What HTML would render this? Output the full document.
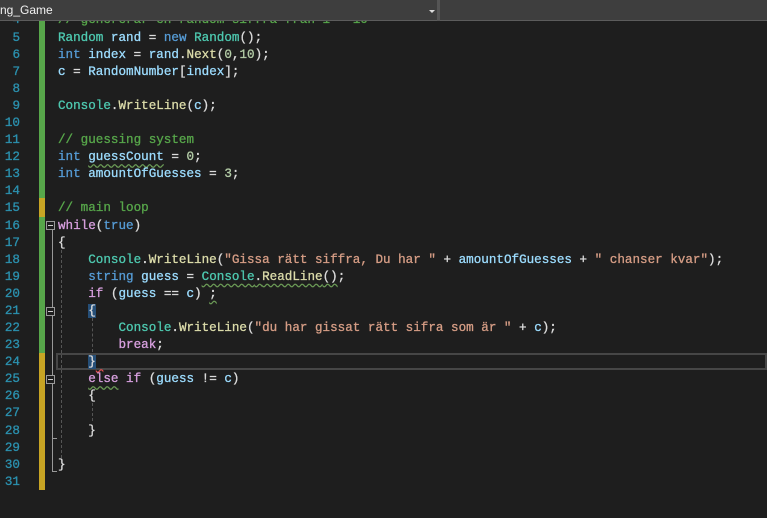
<!DOCTYPE html>
<html><head><meta charset="utf-8"><style>
*{margin:0;padding:0;box-sizing:border-box}
body{width:767px;height:518px;background:#1e1e1e;overflow:hidden;position:relative;font-family:"Liberation Mono",monospace;font-size:12.6px;color:#dcdcdc}
#tab{position:absolute;left:0;top:0;width:767px;height:21px;background:#3e3e3e;border-bottom:1px solid #5c5c5c;z-index:5}
#tab .t{position:absolute;left:0;top:3px;font-family:"Liberation Sans",sans-serif;font-size:12px;color:#f1f1f1}
#tab .sep{position:absolute;left:437px;top:0;width:3px;height:21px;background:#555}
#tab .arr{position:absolute;left:429px;top:10px;width:0;height:0;border-left:3px solid transparent;border-right:3px solid transparent;border-top:3px solid #ddd}
.ln{position:absolute;left:0;width:20px;text-align:right;color:#2b91af;height:17px;line-height:17px;-webkit-text-stroke:0.3px #2b91af}
.cd{position:absolute;left:58px;height:17px;line-height:17px;white-space:pre;-webkit-text-stroke:0.3px currentColor}
.bar{position:absolute;left:39px;width:6px}
.k{color:#569cd6}.ty{color:#4ec9b0}.m{color:#dcdcaa}.v{color:#9cdcfe}.s{color:#d69d85}.c{color:#57a64a}.p{color:#d8a0df}.n{color:#b5cea8}
.fold{position:absolute;left:46px;width:9px;height:9px;border:1px solid #999;background:#1e1e1e}
.fold:after{content:"";position:absolute;left:1px;top:3px;width:5px;height:1px;background:#ccc}
.sq{text-decoration:underline wavy #6a9955;text-underline-offset:3px}
.sqr{text-decoration:underline wavy #e05050;text-underline-offset:3px}
.g{position:absolute;border-left:1px dashed #555}
</style></head><body>
<div id="tab"><span class="t">ng_Game</span><div class="arr"></div><div class="sep"></div></div>

<div class="bar" style="top:12px;height:186px;background:#57a64a"></div>
<div class="bar" style="top:198px;height:19px;background:#c7a424"></div>
<div class="bar" style="top:217px;height:136px;background:#57a64a"></div>
<div class="bar" style="top:353px;height:137px;background:#c7a424"></div>

<div style="position:absolute;left:56px;top:353px;width:711px;height:17px;border:2px solid #464646"></div>

<div style="position:absolute;left:52px;top:227px;height:245px;border-left:1px solid #999"></div>
<div style="position:absolute;left:52px;top:471px;width:5px;border-top:1px solid #999"></div>
<div style="position:absolute;left:52px;top:318px;height:12px;border-left:1px solid #999"></div>
<div style="position:absolute;left:52px;top:438px;width:5px;border-top:1px solid #999"></div>
<div class="g" style="left:61px;top:250px;height:208px"></div>
<div class="g" style="left:92px;top:318px;height:34px"></div>
<div class="g" style="left:92px;top:403px;height:18px"></div>

<div class="fold" style="top:221px"></div>
<div class="fold" style="top:307px"></div>
<div class="fold" style="top:375px"></div>

<div class="ln" style="top:12.4px">4</div><div class="cd c" style="top:12.4px">// genererar en random siffra från 1 - 10</div>
<div class="ln" style="top:29.5px">5</div><div class="cd" style="top:29.5px"><span class="ty">Random</span> <span class="v">rand</span> = <span class="k">new</span> <span class="ty">Random</span>();</div>
<div class="ln" style="top:46.6px">6</div><div class="cd" style="top:46.6px"><span class="k">int</span> <span class="v">index</span> = <span class="v">rand</span>.<span class="m">Next</span>(<span class="n">0</span>,<span class="n">10</span>);</div>
<div class="ln" style="top:63.7px">7</div><div class="cd" style="top:63.7px"><span class="v">c</span> = <span class="v">RandomNumber</span>[<span class="v">index</span>];</div>
<div class="ln" style="top:80.8px">8</div>
<div class="ln" style="top:97.8px">9</div><div class="cd" style="top:97.8px"><span class="ty">Console</span>.<span class="m">WriteLine</span>(<span class="v">c</span>);</div>
<div class="ln" style="top:114.9px">10</div>
<div class="ln" style="top:132px">11</div><div class="cd c" style="top:132px">// guessing system</div>
<div class="ln" style="top:149.1px">12</div><div class="cd" style="top:149.1px"><span class="k">int</span> <span class="v sq">guessCount</span> = <span class="n">0</span>;</div>
<div class="ln" style="top:166.2px">13</div><div class="cd" style="top:166.2px"><span class="k">int</span> <span class="v">amountOfGuesses</span> = <span class="n">3</span>;</div>
<div class="ln" style="top:183.3px">14</div>
<div class="ln" style="top:200.4px">15</div><div class="cd c" style="top:200.4px">// main loop</div>
<div class="ln" style="top:217.5px">16</div><div class="cd" style="top:217.5px"><span class="p">while</span>(<span class="k">true</span>)</div>
<div class="ln" style="top:234.5px">17</div><div class="cd" style="top:234.5px">{</div>
<div class="ln" style="top:251.6px">18</div><div class="cd" style="top:251.6px">    <span class="ty">Console</span>.<span class="m">WriteLine</span>(<span class="s">"Gissa rätt siffra, Du har "</span> + <span class="v">amountOfGuesses</span> + <span class="s">" chanser kvar"</span>);</div>
<div class="ln" style="top:268.7px">19</div><div class="cd" style="top:268.7px">    <span class="k">string</span> <span class="v">guess</span> = <span class="sq"><span class="ty">Console</span>.<span class="m">ReadLine</span>()</span>;</div>
<div class="ln" style="top:285.8px">20</div><div class="cd" style="top:285.8px">    <span class="p">if</span> (<span class="v">guess</span> == <span class="v">c</span>) <span class="sq">;</span></div>
<div class="ln" style="top:302.9px">21</div><div class="cd" style="top:302.9px">    <span style="background:#264f78">{</span></div>
<div class="ln" style="top:320px">22</div><div class="cd" style="top:320px">        <span class="ty">Console</span>.<span class="m">WriteLine</span>(<span class="s">"du har gissat rätt sifra som är "</span> + <span class="v">c</span>);</div>
<div class="ln" style="top:337.1px">23</div><div class="cd" style="top:337.1px">        <span class="p">break</span>;</div>
<div class="ln" style="top:354.2px">24</div><div class="cd" style="top:354.2px">    <span style="background:#264f78">}</span><span class="sqr"> </span></div>
<div class="ln" style="top:371.2px">25</div><div class="cd" style="top:371.2px">    <span class="p sq">else</span> <span class="p">if</span> (<span class="v">guess</span> != <span class="v">c</span>)</div>
<div class="ln" style="top:388.3px">26</div><div class="cd" style="top:388.3px">    {</div>
<div class="ln" style="top:405.4px">27</div>
<div class="ln" style="top:422.5px">28</div><div class="cd" style="top:422.5px">    }</div>
<div class="ln" style="top:439.6px">29</div>
<div class="ln" style="top:456.7px">30</div><div class="cd" style="top:456.7px">}</div>
<div class="ln" style="top:473.8px">31</div>
</body></html>
